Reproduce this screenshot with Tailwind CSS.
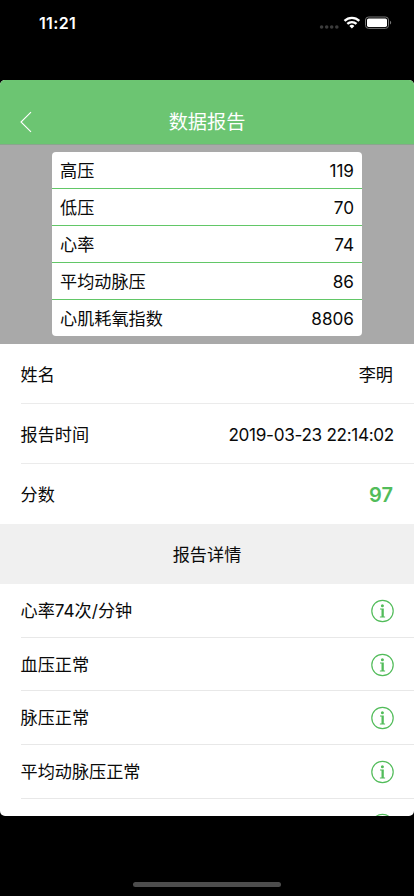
<!DOCTYPE html>
<html lang="zh-CN">
<head>
    <meta charset="UTF-8">
    <meta name="viewport" content="width=device-width, initial-scale=1.0">
    <title>数据报告</title>
    <script src="https://cdn.jsdelivr.net/npm/@tailwindcss/browser@4"></script>
</head>
<body class="bg-black font-['Inter','Noto_Sans_CJK_SC',sans-serif] text-[17.15px] leading-6 text-[#0a0a0a]">
    <!-- info 图标 -->
    <svg class="hidden">
        <symbol id="info" viewBox="0 0 24 24">
            <circle cx="12.5" cy="12" r="10.7" fill="none" stroke="#52bc5a" stroke-width="1.2"/>
            <circle cx="12.4" cy="6.7" r="1.5" fill="#52bc5a"/>
            <path d="M10 9.5h3.8v7.9h1.3v1h-5.2v-1h1.6v-6.9H10z" fill="#52bc5a"/>
        </symbol>
    </svg>

    <div class="flex flex-col w-[414px] h-[896px] overflow-hidden">
        <!-- 状态栏 -->
        <div class="flex justify-between h-20 pl-[39px] pr-[21px] pt-[11px] shrink-0">
            <div class="text-white text-[16px] font-semibold tracking-[0.35px]">11:21</div>
            <svg class="w-[74px] h-6" viewBox="0 0 74 24" fill="none">
                <g fill="#3c3c3c">
                    <circle cx="2.6" cy="16" r="1.8"/>
                    <circle cx="7.7" cy="16" r="1.8"/>
                    <circle cx="12.7" cy="16" r="1.8"/>
                    <circle cx="17.8" cy="16" r="1.8"/>
                </g>
                <g stroke="#fff" stroke-width="2.3">
                    <path d="M25.5 9.9a10.6 10.6 0 0 1 14.8 0"/>
                    <path d="M28.3 12.9a6.6 6.6 0 0 1 9.2 0"/>
                </g>
                <path d="M32.9 17.5l-2.5-2.5a3.5 3.5 0 0 1 5 0z" fill="#fff"/>
                <rect x="46.5" y="6" width="23" height="11.4" rx="3" stroke="#777"/>
                <rect x="48" y="7.5" width="20" height="8.4" rx="1.6" fill="#fff"/>
                <path d="M71 9.8c1.6.6 1.6 3.2 0 3.8z" fill="#777"/>
            </svg>
        </div>

        <div class="h-[735.5px] shrink-0 rounded-[5px] overflow-hidden bg-white">
            <!-- 导航栏 -->
            <div class="grid grid-cols-[60px_1fr_60px] items-center h-[65px] pt-5 bg-[#6cc572] border-b border-[#8aa68d] text-white">
                <svg class="ml-5 w-3 h-[22px]" viewBox="0 0 12 22" fill="none" stroke="#fff" stroke-width="1.1">
                    <path d="M11 1.2L1 11l10 9.8"/>
                </svg>
                <h1 class="text-center text-[19.2px]">数据报告</h1>
            </div>

            <!-- 测量数据 -->
            <div class="h-[199px] px-[52px] pt-[7px] bg-[#a9a9a9]">
                <div class="rounded bg-white divide-y divide-[#62c767]">
                    <div class="flex items-center justify-between h-[37px] px-2 pt-0.5"><span>高压</span><span>119</span></div>
                    <div class="flex items-center justify-between h-[37px] px-2 pt-0.5"><span>低压</span><span>70</span></div>
                    <div class="flex items-center justify-between h-[37px] px-2 pt-0.5"><span>心率</span><span>74</span></div>
                    <div class="flex items-center justify-between h-[37px] px-2 pt-0.5"><span>平均动脉压</span><span>86</span></div>
                    <div class="flex items-center justify-between h-9 px-2 pt-0.5"><span>心肌耗氧指数</span><span>8806</span></div>
                </div>
            </div>

            <!-- 基本信息 -->
            <div class="pl-[20.5px]">
                <div class="flex items-center justify-between h-[60px] pt-0.5 pr-[21px] border-b border-[#ebebeb]"><span>姓名</span><span>李明</span></div>
                <div class="flex items-center justify-between h-[60px] pt-0.5 pr-5 border-b border-[#ebebeb]"><span>报告时间</span><span class="tracking-[-0.31px]">2019-03-23 22:14:02</span></div>
                <div class="flex items-center justify-between h-[60px] pt-px pr-[21px]"><span>分数</span><span class="text-[20px] font-semibold text-[#52bc5a]">97</span></div>
            </div>

            <!-- 报告详情 -->
            <h2 class="flex items-center justify-center h-[60px] pt-0.5 bg-[#f0f0f0]">报告详情</h2>
            <div class="pl-[20.5px]">
                <div class="flex items-center justify-between h-[54px] pt-px pr-5 border-b border-[#e8e8e8]"><span>心率74次/分钟</span><svg class="w-6 h-6"><use href="#info"/></svg></div>
                <div class="flex items-center justify-between h-[53px] pt-px pr-5 border-b border-[#e8e8e8]"><span>血压正常</span><svg class="w-6 h-6"><use href="#info"/></svg></div>
                <div class="flex items-center justify-between h-[54px] pt-px pr-5 border-b border-[#e8e8e8]"><span>脉压正常</span><svg class="w-6 h-6"><use href="#info"/></svg></div>
                <div class="flex items-center justify-between h-[54px] pt-px pr-5 border-b border-[#e8e8e8]"><span>平均动脉压正常</span><svg class="w-6 h-6"><use href="#info"/></svg></div>
                <div class="flex items-center justify-end h-[52px] pr-5"><svg class="w-6 h-6"><use href="#info"/></svg></div>
            </div>
        </div>

        <!-- Home 指示条 -->
        <div class="w-[148px] h-[5px] mt-[66.5px] mx-auto shrink-0 rounded-full bg-[#4d4d4d]"></div>
    </div>
</body>
</html>
